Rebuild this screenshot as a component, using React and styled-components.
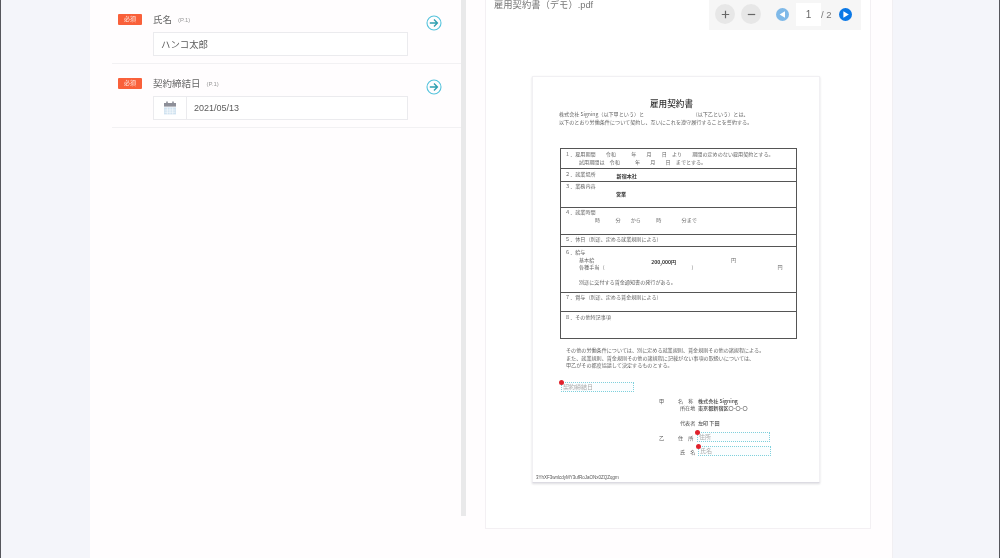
import React from "react";
import styled, { createGlobalStyle } from "styled-components";

const Global = createGlobalStyle`
  html, body { margin: 0; padding: 0; height: 100%; overflow: hidden; background: #f4f5fa; }
  body { font-family: "Liberation Sans", "Noto Sans CJK JP", sans-serif; }
  * { box-sizing: border-box; }
`;

const Page = styled.div`
  height: 558px;
  width: 1000px;
  overflow: hidden;
  background: #f4f5fa;
  border-left: 1px solid #55565c;
  border-right: 1px solid #55565c;
  padding-left: 89px;
  filter: blur(0.4px);
`;
const Main = styled.main`
  width: 803px;
  height: 558px;
  background: #fffdfe;
  border-right: 1px solid #f1eff2;
  display: flex;
  align-items: flex-start;
`;
const FormColumn = styled.section`
  width: 371px;
  padding-left: 22px;
`;
const FieldRow = styled.div`
  height: 64px;
  padding: 14px 0 0 6px;
  border-bottom: 1px solid #f2f1f3;
  display: grid;
  grid-template-columns: 35px 255px 34px;
  grid-template-rows: 12px 24px;
  row-gap: 6px;
`;
const Badge = styled.span`
  grid-row: 1;
  width: 24px;
  height: 11px;
  background: #f9603a;
  border-radius: 1px;
  color: #ffe9e2;
  font-size: 6px;
  line-height: 11px;
  text-align: center;
`;
const LabelLine = styled.div`
  grid-row: 1;
  grid-column: 2;
  display: flex;
  align-items: center;
  gap: 6px;
  line-height: 12px;
`;
const Label = styled.span`
  font-size: 9.5px;
  color: #666;
`;
const PageRef = styled.span`
  font-size: 6px;
  color: #999;
`;
const ArrowLink = styled.span`
  grid-row: 1 / 3;
  grid-column: 3;
  justify-self: end;
  margin-top: 1px;
  width: 16px;
  height: 16px;
  display: block;
  line-height: 0;
`;
const InputBox = styled.div`
  grid-row: 2;
  grid-column: 2;
  height: 24px;
  border: 1px solid #ebebee;
  background: #fff;
  display: flex;
  align-items: center;
  font-size: ${(p) => (p.$addon ? 9 : 9.4)}px;
  color: #5c5c5c;
  padding-left: ${(p) => (p.$addon ? 0 : 7)}px;
`;
const Addon = styled.span`
  width: 33px;
  height: 100%;
  border-right: 1px solid #ebebee;
  display: flex;
  align-items: center;
  justify-content: center;
  margin-right: 7px;
`;
const Scrollbar = styled.div`
  width: 5px;
  height: 516px;
  background: #e9e9ea;
  flex: none;
`;
const ViewerCard = styled.section`
  margin-left: 19px;
  width: 386px;
  height: 529px;
  border: 1px solid #f3f0f3;
  border-top: none;
  background: #fff;
  flex: none;
`;
const ViewerHeader = styled.header`
  display: flex;
  justify-content: space-between;
  padding: 0 9px 0 8px;
`;
const FileName = styled.div`
  font-size: 9.3px;
  line-height: 10px;
  color: #777;
`;
const Toolbar = styled.div`
  width: 152px;
  height: 30px;
  background: #f6f6f6;
  display: flex;
  align-items: center;
  padding: 0 0 2px 6px;
`;
const ZoomButton = styled.span`
  width: 20px;
  height: 20px;
  border-radius: 50%;
  background: #e7e7e7;
  margin-right: 6px;
  display: flex;
  align-items: center;
  justify-content: center;
`;
const PagerIcon = styled.span`
  width: 13px;
  height: 13px;
  display: block;
  line-height: 0;
  margin-left: ${(p) => p.$ml}px;
`;
const PageInput = styled.div`
  width: 25px;
  height: 23px;
  margin-left: 7px;
  background: #fff;
  color: #666;
  font-size: 10px;
  line-height: 23px;
  text-align: center;
`;
const PageTotal = styled.span`
  font-size: 9.5px;
  color: #777;
  white-space: pre;
`;
const Paper = styled.article`
  position: relative;
  margin: 46px 0 0 46px;
  width: 288px;
  height: 407px;
  background: #fff;
  border: 1px solid #f1f0f3;
  border-bottom-color: #dcdbe2;
  box-shadow: 0 1px 2px rgba(100, 100, 120, 0.22);
  padding-top: 20px;
  font-family: "Noto Sans CJK JP", sans-serif;
  color: #666;
`;
const DocTitle = styled.h1`
  margin: 0;
  padding-right: 9px;
  font-size: 8.6px;
  line-height: 12px;
  font-weight: 500;
  color: #333;
  text-align: center;
`;
const Para = styled.div`
  margin: ${(p) => p.$top || 0}px 0 0 ${(p) => p.$left}px;
`;
const DocLine = styled.div`
  font-size: 5.1px;
  line-height: 7.5px;
  min-height: 7.5px;
  white-space: pre;
  color: #666;
  display: flex;
  padding-left: ${(p) => p.$indent || 0}px;
`;
const Strong = styled.span`
  position: relative;
  left: ${(p) => p.$x}px;
  top: ${(p) => p.$y || 0}px;
  color: #333;
  font-weight: 700;
`;
const Spaced = styled.span`
  margin-left: ${(p) => p.$ml}px;
`;
const DocTable = styled.div`
  margin: 23px 0 0 27px;
  width: 237px;
  border: 1px solid #555;
  border-bottom-width: 0;
`;
const DocRow = styled.div`
  height: ${(p) => p.$h}px;
  border-bottom: 1px solid #555;
  padding: ${(p) => p.$pad}px 0 0 4px;
  margin-bottom: ${(p) => (p.$double ? 1 : 0)}px;
  box-shadow: ${(p) => (p.$double ? "0 1px 0 #fff" : "none")};
`;
const SignBlock = styled.div`
  margin: 28px 0 0 126px;
`;
const SignRow = styled.div`
  display: grid;
  grid-template-columns: 19px 20px auto;
  font-size: 5.1px;
  line-height: 7.5px;
  color: #555;
  margin-top: ${(p) => p.$top || 0}px;
  white-space: pre;
`;
const SignLabel = styled.span`
  padding-left: ${(p) => p.$indent || 0}px;
`;
const SignValue = styled.span`
  color: #444;
  font-weight: 500;
`;
const DocId = styled.div`
  margin: 18px 0 0 3px;
  font-family: "Liberation Sans", sans-serif;
  font-size: 4.5px;
  line-height: 8px;
  color: #555;
`;
const FormSlot = styled.div`
  position: absolute;
  left: ${(p) => p.$x}px;
  top: ${(p) => p.$y}px;
  width: 73px;
  height: 10px;
  border: 1px dotted #7fd0dc;
  background: #fbfeff;
  font-size: 6px;
  line-height: 8px;
  color: #aaa;
  padding-left: 1px;
  &::before {
    content: "";
    position: absolute;
    left: -3px;
    top: -3px;
    width: 5px;
    height: 5px;
    border-radius: 50%;
    background: #e0222c;
  }
`;

const Arrow = () => (
  <svg width="16" height="16" viewBox="0 0 16 16" fill="none">
    <circle cx="8" cy="8" r="7" stroke="#55c3dc" strokeWidth="1.1" />
    <path d="M3.8 8h7.6M8 4.6 11.4 8 8 11.4" stroke="#2f9fb0" strokeWidth="1.4" />
  </svg>
);
const Calendar = () => (
  <svg width="12" height="14" viewBox="0 0 12 14">
    <rect x="0" y="2" width="12" height="3.6" fill="#8d8f98" />
    <rect x="2.2" y="0.5" width="1.6" height="2.5" fill="#8d8f98" />
    <rect x="8.2" y="0.5" width="1.6" height="2.5" fill="#8d8f98" />
    <rect x="0" y="6.4" width="12" height="7" fill="#cfe2f0" />
    <path d="M0.5 9h11M0.5 11.2h11M3.3 6.5v7M6 6.5v7M8.7 6.5v7" stroke="#fff" strokeWidth="0.6" />
  </svg>
);
const Pager = ({ color, dir }) => (
  <svg width="13" height="13" viewBox="0 0 13 13">
    <circle cx="6.5" cy="6.5" r="6.5" fill={color} />
    <path d={dir === "left" ? "M9 3.2v6.6L3.6 6.5z" : "M4.4 3.2v6.6L9.8 6.5z"} fill="#fff" />
  </svg>
);
const Plus = () => (
  <svg width="9" height="9" viewBox="0 0 9 9"><path d="M0.8 4.5h7.4M4.5 0.8v7.4" stroke="#666" strokeWidth="1.2" /></svg>
);
const Minus = () => (
  <svg width="9" height="9" viewBox="0 0 9 9"><path d="M0.8 4.5h7.4" stroke="#666" strokeWidth="1.2" /></svg>
);

const fields = [
  { x: 28, y: 305, text: "契約締結日" },
  { x: 164, y: 355, text: "住所" },
  { x: 165, y: 369, text: "氏名" },
];

export default function App() {
  return (
    <>
      <Global />
      <Page>
        <Main>
          <FormColumn>
            <FieldRow>
              <Badge>必須</Badge>
              <LabelLine><Label>氏名</Label><PageRef>(P.1)</PageRef></LabelLine>
              <InputBox>ハンコ太郎</InputBox>
              <ArrowLink><Arrow /></ArrowLink>
            </FieldRow>
            <FieldRow>
              <Badge>必須</Badge>
              <LabelLine><Label>契約締結日</Label><PageRef>(P.1)</PageRef></LabelLine>
              <InputBox $addon><Addon><Calendar /></Addon>2021/05/13</InputBox>
              <ArrowLink><Arrow /></ArrowLink>
            </FieldRow>
          </FormColumn>
          <Scrollbar />
          <ViewerCard>
            <ViewerHeader>
              <FileName>雇用契約書（デモ）.pdf</FileName>
              <Toolbar>
                <ZoomButton><Plus /></ZoomButton>
                <ZoomButton><Minus /></ZoomButton>
                <PagerIcon $ml={9}><Pager color="#7fb9e8" dir="left" /></PagerIcon>
                <PageInput>1</PageInput>
                <PageTotal>/ 2</PageTotal>
                <PagerIcon $ml={7}><Pager color="#0a78e6" dir="right" /></PagerIcon>
              </Toolbar>
            </ViewerHeader>
            <Paper>
              <DocTitle>雇用契約書</DocTitle>
              <Para $top={1} $left={26}>
                <DocLine>株式会社 Signing（以下甲という）と　　　　　　　　　　（以下乙という）とは、</DocLine>
                <DocLine>以下のとおり労働条件について契約し、互いにこれを遵守履行することを誓約する。</DocLine>
              </Para>
              <DocTable>
                <DocRow $h={20} $double $pad={1}>
                  <DocLine>１．雇用期間　　令和　　　年　　月　　日　より　　期間の定めのない雇用契約とする。</DocLine>
                  <DocLine $indent={14}>試用期間は　令和　　　年　　月　　日　までとする。</DocLine>
                </DocRow>
                <DocRow $h={12} $pad={0}>
                  <DocLine>２．就業場所<Strong $x={21} $y={2}>新宿本社</Strong></DocLine>
                </DocRow>
                <DocRow $h={26} $pad={0}>
                  <DocLine>３．業務内容</DocLine>
                  <DocLine><Strong $x={51}>営業</Strong></DocLine>
                </DocRow>
                <DocRow $h={27} $pad={0}>
                  <DocLine>４．就業時間</DocLine>
                  <DocLine $indent={30}>時　　　分　　から　　　時　　　　分まで</DocLine>
                </DocRow>
                <DocRow $h={12} $pad={0}>
                  <DocLine>５．休日（別途、定める就業規則による）</DocLine>
                </DocRow>
                <DocRow $h={46} $pad={1}>
                  <DocLine>６．給与</DocLine>
                  <DocLine $indent={14}>基本給<Strong $x={57} $y={2}>200,000円</Strong><Spaced $ml={112}>円</Spaced></DocLine>
                  <DocLine $indent={14}>各種手当（<Spaced $ml={87}>）</Spaced><Spaced $ml={81}>円</Spaced></DocLine>
                  <DocLine $indent={14} />
                  <DocLine $indent={14}>別途に交付する賃金通知書の発行がある。</DocLine>
                </DocRow>
                <DocRow $h={19} $pad={0}>
                  <DocLine>７．賞与（別途、定める賃金規則による）</DocLine>
                </DocRow>
                <DocRow $h={27} $pad={1}>
                  <DocLine>８．その他特記事項</DocLine>
                </DocRow>
              </DocTable>
              <Para $top={7} $left={33}>
                <DocLine>その他の労働条件については、別に定める就業規則、賃金規則その他の諸規程による。</DocLine>
                <DocLine>また、就業規則、賃金規則その他の諸規程に記載がない事項の取扱いについては、</DocLine>
                <DocLine>甲乙がその都度協議して決定するものとする。</DocLine>
              </Para>
              <SignBlock>
                <SignRow><span>甲</span><SignLabel>名　称</SignLabel><SignValue>株式会社 Signing</SignValue></SignRow>
                <SignRow><span></span><SignLabel $indent={2}>所在地</SignLabel><SignValue>東京都新宿区〇-〇-〇</SignValue></SignRow>
                <SignRow $top={7}><span></span><SignLabel $indent={2}>代表者</SignLabel><SignValue>左印 下田</SignValue></SignRow>
                <SignRow $top={7.5}><span>乙</span><SignLabel>住　所</SignLabel><span></span></SignRow>
                <SignRow $top={7}><span></span><SignLabel $indent={2}>氏　名</SignLabel><span></span></SignRow>
              </SignBlock>
              <DocId>3YhXF3wnlcdyMY3ufRoJaONx0ZQZqgm</DocId>
              {fields.map((f) => (
                <FormSlot key={f.text} $x={f.x} $y={f.y}>{f.text}</FormSlot>
              ))}
            </Paper>
          </ViewerCard>
        </Main>
      </Page>
    </>
  );
}
